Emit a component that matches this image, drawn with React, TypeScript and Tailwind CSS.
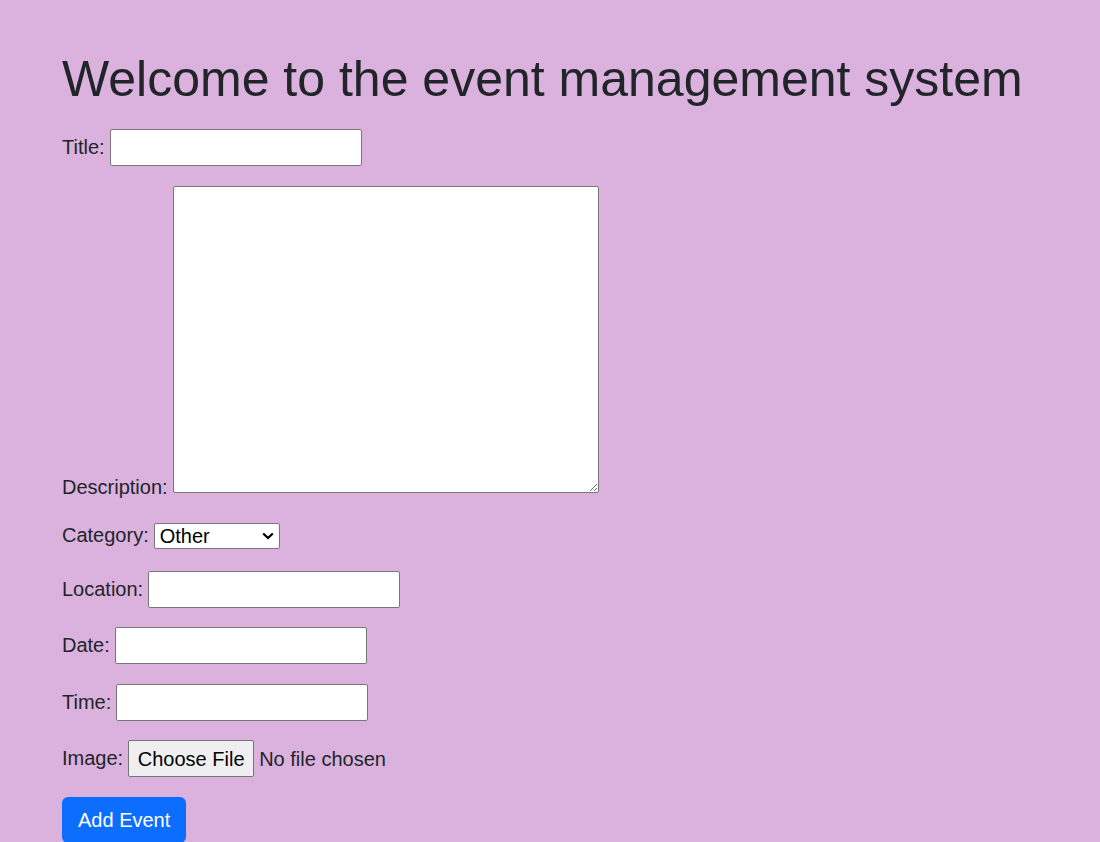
import React, { useState } from "react";

const categories = ["Music", "Sports", "Conference", "Workshop", "Other"];

const inputCls =
  "h-[37px] w-[252px] border border-[#767676] rounded-[2px] bg-white px-[3px] text-[20px] text-black outline-none";

const Row = ({ label, children }: { label: string; children: React.ReactNode }) => (
  <div className="flex items-center gap-[5px]">
    <label className="-mt-[2px]">{label}</label>
    {children}
  </div>
);

const App = () => {
  const [category, setCategory] = useState("Other");
  return (
    <div
      className="min-h-screen bg-[#dbb2de] px-[62px] pt-[49px] text-[20px] text-[#212529]"
      style={{ fontFamily: '"Liberation Sans", Arial, sans-serif' }}
    >
      <h1 className="text-[50px] leading-[1.2] mb-[20px]">Welcome to the event management system</h1>
      <form className="flex flex-col" onSubmit={(e) => e.preventDefault()}>
        <Row label="Title:">
          <input type="text" className={inputCls} />
        </Row>
        <div className="mt-[20px] flex items-end gap-[5px]">
          <label className="-mb-[9px] leading-normal">Description:</label>
          <textarea className="h-[307px] w-[426px] resize border border-[#767676] rounded-[2px] bg-white p-[2px] text-[20px] text-black outline-none" />
        </div>
        <div className="mt-[29px]">
          <Row label="Category:">
            <div className="relative flex">
              <select
                value={category}
                onChange={(e) => setCategory(e.target.value)}
                className="h-[26px] w-[126px] appearance-none border border-[#767676] rounded-[2px] bg-white pl-[5px] text-[20px] leading-[22px] text-black outline-none"
              >
                {categories.map((c) => (
                  <option key={c}>{c}</option>
                ))}
              </select>
              <svg
                className="pointer-events-none absolute right-[6px] top-[9px]"
                width="12"
                height="8"
                viewBox="0 0 12 8"
              >
                <path d="M1.2 1.5 L6 6 L10.8 1.5" fill="none" stroke="#000" strokeWidth="2.3" />
              </svg>
            </div>
          </Row>
        </div>
        <div className="mt-[21px]">
          <Row label="Location:">
            <input type="text" className={inputCls} />
          </Row>
        </div>
        <div className="mt-[19px]">
          <Row label="Date:">
            <input type="text" className={inputCls} />
          </Row>
        </div>
        <div className="mt-[20px]">
          <Row label="Time:">
            <input type="text" className={inputCls} />
          </Row>
        </div>
        <div className="mt-[19px]">
          <Row label="Image:">
            <button
              type="button"
              className="h-[37px] w-[126px] border border-[#767676] rounded-[2px] bg-[#efefef] text-[20px] text-black"
            >
              Choose File
            </button>
            <span>No file chosen</span>
          </Row>
        </div>
        <div className="mt-[20px]">
          <button
            type="submit"
            className="h-[46px] rounded-[6px] bg-[#0d6efd] px-[16px] text-[20px] text-white"
          >
            Add Event
          </button>
        </div>
      </form>
    </div>
  );
};

export default App;
